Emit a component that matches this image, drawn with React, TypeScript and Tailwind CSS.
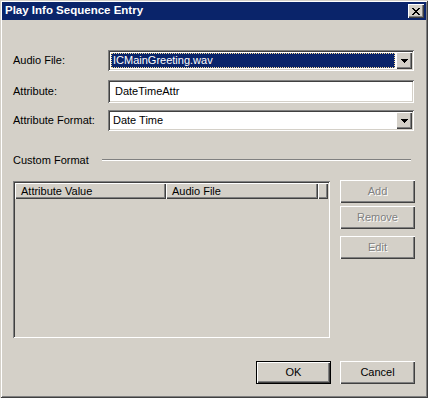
import React from 'react';

const sunken =
  'shadow-[inset_1px_1px_#808080,inset_-1px_-1px_#ffffff,inset_2px_2px_#404040,inset_-2px_-2px_#d4d0c8]';
const raised =
  'shadow-[inset_1px_1px_#ffffff,inset_-1px_-1px_#404040,inset_-2px_-2px_#808080]';

function Arrow() {
  return (
    <svg width="7" height="4" viewBox="0 0 7 4" shapeRendering="crispEdges">
      <rect x="0" y="0" width="7" height="1" fill="#000" />
      <rect x="1" y="1" width="5" height="1" fill="#000" />
      <rect x="2" y="2" width="3" height="1" fill="#000" />
      <rect x="3" y="3" width="1" height="1" fill="#000" />
    </svg>
  );
}

function CloseGlyph() {
  const rows = ['11000011', '01100110', '00111100', '00011000', '00111100', '01100110', '11000011'];
  return (
    <svg width="8" height="7" viewBox="0 0 8 7" shapeRendering="crispEdges">
      {rows.map((r, y) =>
        r.split('').map((c, x) => (c === '1' ? <rect key={`${x}-${y}`} x={x} y={y} width="1" height="1" fill="#000" /> : null))
      )}
    </svg>
  );
}

function DropButton() {
  return (
    <div className={`w-[16px] h-[17px] bg-[#d4d0c8] flex items-center justify-center ${raised}`}>
      <Arrow />
    </div>
  );
}

function Combo({ value, focused }: { value: string; focused?: boolean }) {
  return (
    <div className={`w-[306px] h-[21px] bg-white p-[2px] flex ${sunken}`}>
      <div className="flex-1 p-[1px] flex">
        {focused ? (
          <div className="flex-1 bg-[#0a246a] border border-dotted border-[#f5db95] text-white flex items-center pl-[1px]">
            {value}
          </div>
        ) : (
          <div className="flex-1 flex items-center pl-[2px] text-black">{value}</div>
        )}
      </div>
      <DropButton />
    </div>
  );
}

function Button({ label, disabled, isDefault }: { label: string; disabled?: boolean; isDefault?: boolean }) {
  const text = disabled ? 'text-[#808080] [text-shadow:1px_1px_0_#ffffff]' : 'text-black';
  if (isDefault) {
    return (
      <div className="w-[75px] h-[23px] border border-black">
        <div className={`w-full h-full bg-[#d4d0c8] flex items-center justify-center ${raised} ${text}`}>{label}</div>
      </div>
    );
  }
  return (
    <div className={`w-[75px] h-[23px] bg-[#d4d0c8] flex items-center justify-center ${raised} ${text}`}>{label}</div>
  );
}

export default function App() {
  return (
    <div
      className="w-[428px] h-[398px] bg-[#d4d0c8] p-[2px] flex flex-col text-[11px] text-black shadow-[inset_1px_1px_#d4d0c8,inset_-1px_-1px_#404040,inset_2px_2px_#ffffff,inset_-2px_-2px_#808080] overflow-hidden"
      style={{ fontFamily: '"Liberation Sans", Arial, sans-serif' }}
    >
      <div className="h-[18px] bg-[#0a246a] flex items-center pl-[3px] pr-[2px]">
        <span className="flex-1 text-white font-bold text-[11.5px] leading-none">Play Info Sequence Entry</span>
        <div className={`w-[16px] h-[14px] bg-[#d4d0c8] flex items-center justify-center ${raised}`}>
          <CloseGlyph />
        </div>
      </div>

      <div className="flex-1 flex flex-col pl-[11px] pr-[11px] pt-[30px]">
        <div className="flex items-center h-[21px]">
          <span className="w-[95px]">Audio File:</span>
          <Combo value="ICMainGreeting.wav" focused />
        </div>

        <div className="flex items-center h-[23px] mt-[9px]">
          <span className="w-[95px]">Attribute:</span>
          <div className={`w-[306px] h-[23px] bg-white flex items-center pl-[7px] ${sunken}`}>DateTimeAttr</div>
        </div>

        <div className="flex items-center h-[21px] mt-[7px]">
          <span className="w-[95px]">Attribute Format:</span>
          <Combo value="Date Time" />
        </div>

        <div className="flex items-center h-[16px] mt-[21px]">
          <span className="pr-[13px]">Custom Format</span>
          <div className="flex-1 mr-[4px] border-t border-t-[#808080] border-b border-b-white" />
        </div>

        <div className="flex mt-[12px]">
          <div className={`w-[317px] h-[157px] mt-[1px] bg-[#d4d0c8] p-[2px] ${sunken}`}>
            <div className="flex h-[16px]">
              <div className={`w-[151px] h-full flex items-center pl-[6px] ${raised}`}>Attribute Value</div>
              <div className={`w-[152px] h-full flex items-center pl-[6px] ${raised}`}>Audio File</div>
              <div className={`flex-1 h-full ${raised}`} />
            </div>
          </div>
          <div className="ml-[10px] flex flex-col">
            <Button label="Add" disabled />
            <div className="mt-[3px]">
              <Button label="Remove" disabled />
            </div>
            <div className="mt-[7px]">
              <Button label="Edit" disabled />
            </div>
          </div>
        </div>

        <div className="flex justify-end gap-[9px] mt-[23px]">
          <Button label="OK" isDefault />
          <Button label="Cancel" />
        </div>
      </div>
    </div>
  );
}
